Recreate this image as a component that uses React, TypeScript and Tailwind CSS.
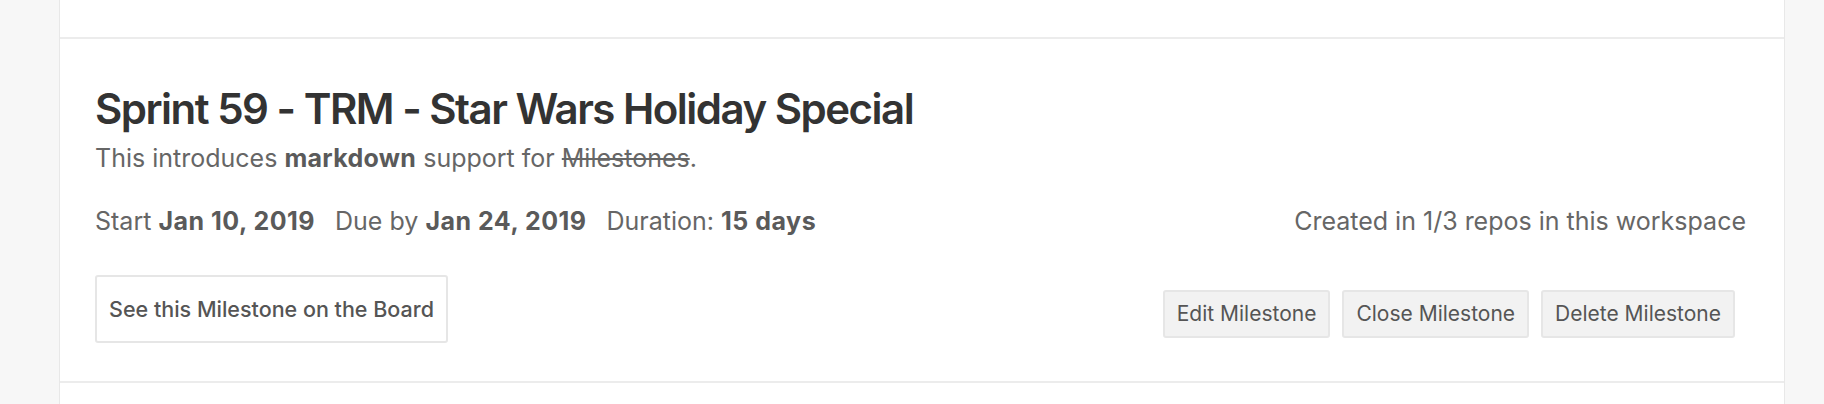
import React from 'react';

const font = { fontFamily: 'Inter, "Noto Sans", sans-serif' };

export default function App() {
  return (
    <div className="h-[404px] w-full bg-[#f7f7f7] overflow-hidden" style={font}>
      <div className="ml-[59px] w-[1726px] h-full bg-white border-x border-[#e8e8e8] flex flex-col">
        {/* previous milestone (cut off) */}
        <div className="h-[39px] shrink-0 border-b-2 border-[#ececec]" />

        <div className="pl-[35px] pr-[38px] pt-[45px] pb-[38px] border-b-2 border-[#ececec]">
          <h2 className="text-[42px] leading-[50px] font-semibold text-[#333] tracking-[-1.5px]">
            Sprint 59 - TRM - Star Wars Holiday Special
          </h2>
          <p className="mt-[8px] text-[25px] leading-[32px] text-[#666]">
            This introduces <strong className="font-bold text-[#5a5a5a] tracking-[0.3px]">markdown</strong> support for{' '}
            <del>Milestones</del>.
          </p>

          <div className="mt-[31px] flex items-center justify-between text-[25px] leading-[32px] text-[#666]">
            <div className="flex gap-[20px]">
              <span>
                Start <b className="font-bold text-[#5a5a5a] tracking-[0.5px]">Jan 10, 2019</b>
              </span>
              <span>
                Due by <b className="font-bold text-[#5a5a5a] tracking-[0.5px]">Jan 24, 2019</b>
              </span>
              <span>
                Duration: <b className="font-bold text-[#5a5a5a] tracking-[0.5px]">15 days</b>
              </span>
            </div>
            <span>Created in 1/3 repos in this workspace</span>
          </div>

          <div className="mt-[38px] flex items-start justify-between">
            <button className="h-[68px] px-[12px] border-2 border-[#e6e6e6] rounded-[3px] bg-white text-[21.5px] font-medium text-[#555]">
              See this Milestone on the Board
            </button>
            <div className="mt-[15px] mr-[11px] flex gap-[12px]">
              {['Edit Milestone', 'Close Milestone', 'Delete Milestone'].map((label) => (
                <button
                  key={label}
                  className="h-[48px] px-[12px] border-2 border-[#e6e6e6] rounded-[3px] bg-[#f2f2f2] text-[21px] text-[#555]"
                >
                  {label}
                </button>
              ))}
            </div>
          </div>
        </div>
        <div className="flex-1" />
      </div>
    </div>
  );
}
